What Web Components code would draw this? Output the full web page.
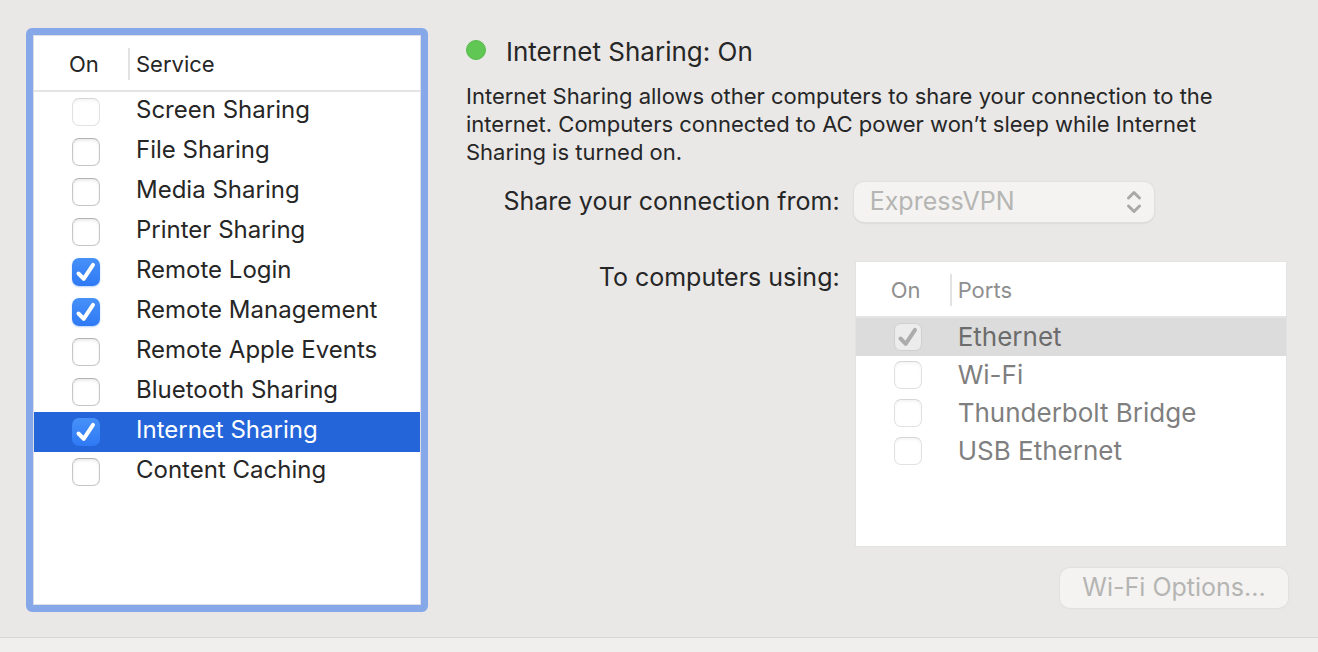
<!DOCTYPE html>
<html lang="en">
<head>
<meta charset="utf-8">
<meta name="viewport" content="width=device-width, initial-scale=1">
<title>Sharing</title>
<style>
  body {
    margin: 0;
    background: #e9e8e6;
    color: #262626;
    font-family: Inter, "Liberation Sans", sans-serif;
  }
</style>
</head>
<body>

<sharing-pane>
  <check-table slot="services" id="services" class="focused" heading="Service"></check-table>

  <status-line>Internet Sharing: On</status-line>
  <help-text>Internet Sharing allows other computers to share your connection to the internet. Computers connected to AC power won’t sleep while Internet Sharing is turned on.</help-text>
  <popup-field label="Share your connection from:" value="ExpressVPN"></popup-field>
  <form-row>
    <span slot="label">To computers using:</span>
    <check-table id="ports" class="inactive" heading="Ports" disabled></check-table>
  </form-row>
  <push-button disabled>Wi-Fi Options...</push-button>
</sharing-pane>

<script>
const services = [
  {name: 'Screen Sharing', disabled: true},
  {name: 'File Sharing'},
  {name: 'Media Sharing'},
  {name: 'Printer Sharing'},
  {name: 'Remote Login', on: true},
  {name: 'Remote Management', on: true},
  {name: 'Remote Apple Events'},
  {name: 'Bluetooth Sharing'},
  {name: 'Internet Sharing', on: true, selected: true},
  {name: 'Content Caching'}
]

const ports = [
  {name: 'Ethernet', on: true, selected: true},
  {name: 'Wi-Fi'},
  {name: 'Thunderbolt Bridge'},
  {name: 'USB Ethernet'}
]

// attach an open root and fill it from a template
function stamp (element, html) {
  const template = document.createElement('template')
  template.innerHTML = html
  element.attachShadow({mode: 'open'})
  element.shadowRoot.appendChild(document.importNode(template.content, true))
}

class SharingPane extends HTMLElement {
  constructor () {
    super()
    stamp(this,
    `<style>
      :host {
        display: flex;
        flex-direction: column;
        min-height: 100vh;
      }

      main {
        flex: 1;
        display: flex;
        gap: 38px;
        padding: 28px 30px 25px 26px;
      }

      aside {
        flex: 0 0 402px;
        display: flex;
      }

      section {
        flex: 1;
        min-width: 0;
        display: flex;
        flex-direction: column;
      }

      footer {
        height: 14px;
        border-top: 1px solid #d8d7d5;
        background: #f0efed;
      }
      </style>
      <main>
        <aside><slot name="services"></slot></aside>
        <section><slot></slot></section>
      </main>
      <footer></footer>`)
  }
}

class StatusLine extends HTMLElement {
  constructor () {
    super()
    stamp(this,
    `<style>
      :host {
        display: flex;
        align-items: center;
        gap: 20px;
        height: 46px;
        margin-bottom: 8px;
      }

      .light {
        width: 20px;
        height: 20px;
        margin-bottom: 2px;
        box-sizing: border-box;
        border: 1px solid #57bb4b;
        border-radius: 50%;
        background: #60c654;
      }

      h1 {
        margin: 0;
        font-size: 26px;
        font-weight: 400;
      }
      </style>
      <span class="light"></span>
      <h1><slot></slot></h1>`)
  }
}

class HelpText extends HTMLElement {
  constructor () {
    super()
    stamp(this,
    `<style>
      :host {
        display: block;
        max-width: 780px;
        margin-bottom: 16px;
      }

      p {
        margin: 0;
        font-size: 22px;
        line-height: 28px;
      }
      </style>
      <p><slot></slot></p>`)
  }
}

class FormRow extends HTMLElement {
  constructor () {
    super()
    stamp(this,
    `<style>
      :host {
        display: grid;
        grid-template-columns: 37fr 43fr;
        gap: 14px;
        font-size: 25px;
        line-height: 32px;
      }

      .label { text-align: right; white-space: nowrap; }
      </style>
      <div class="label"><slot name="label"></slot></div>
      <div><slot></slot></div>`)
  }
}

class PopupField extends HTMLElement {
  constructor () {
    super()
    stamp(this,
    `<style>
      :host {
        display: grid;
        grid-template-columns: 37fr 43fr;
        align-items: center;
        gap: 14px;
        margin-bottom: 39px;
        font-size: 25px;
      }

      label {
        padding-bottom: 2px;
        text-align: right;
        white-space: nowrap;
      }

      .popup {
        display: grid;
        grid-template-columns: minmax(0, 300px);
        align-items: center;
      }

      select, svg { grid-area: 1 / 1; }

      select {
        appearance: none;
        height: 40px;
        padding: 0 16px 2px;
        border: 0;
        border-radius: 10px;
        background: #f4f3f1;
        box-shadow: 0 0 1px 1px #e0e0de, 0 1px 2px #c4c3c1;
        color: #b5b5b3;
        opacity: 1;
        font: inherit;
      }

      svg {
        justify-self: end;
        margin-right: 12px;
        pointer-events: none;
      }
      </style>
      <label for="popup"></label>
      <div class="popup">
        <select id="popup" disabled><option></option></select>
        <svg width="16" height="24" viewBox="0 0 16 24" fill="none" stroke="#aaa9a7" stroke-width="3" stroke-linecap="round" stroke-linejoin="round">
          <path d="M2.5 8 8 2.5 13.5 8M2.5 16 8 21.5 13.5 16"/>
        </svg>
      </div>`)
  }

  connectedCallback () {
    this.shadowRoot.querySelector('label').textContent = this.getAttribute('label')
    this.shadowRoot.querySelector('option').textContent = this.getAttribute('value')
  }
}

class PushButton extends HTMLElement {
  constructor () {
    super()
    stamp(this,
    `<style>
      :host {
        display: block;
        align-self: flex-end;
        margin-top: 21px;
      }

      button {
        display: block;
        min-width: 228px;
        height: 40px;
        padding: 0 16px 2px;
        border: 0;
        border-radius: 10px;
        background: #f4f3f1;
        box-shadow: 0 0 1px 1px #e0e0de;
        color: #b5b5b3;
        font: 25px Inter, "Liberation Sans", sans-serif;
      }
      </style>
      <button type="button"><slot></slot></button>`)
  }

  connectedCallback () {
    this.shadowRoot.querySelector('button').disabled = this.hasAttribute('disabled')
  }
}

class CheckTable extends HTMLElement {
  constructor () {
    super()
    stamp(this,
    `<style>
      :host {
        flex: 1;
        display: block;
        box-sizing: border-box;
        background: #fff;
        border: 1px solid #dfdfdf;
        font-size: 24px;
        line-height: 28px;
      }

      :host(.focused) {
        border: 7px solid #87a8e8;
        border-radius: 6px;
        box-shadow: inset 0 0 0 1px #dcdfe6;
        padding: 1px;
        --row: 40px;
        --lift: 4px;
        --selected: #2465da;
        --selected-text: #fff;
      }

      :host(.inactive) {
        min-height: 286px;
        margin-left: 1px;
        margin-right: 1px;
        border-color: #e3e3e2;
        font-size: 26px;
        color: #7f7f7f;
        --row: 38px;
        --lift: 0;
        --selected: #dcdcdc;
        --selected-text: #6c6c6c;
        --head-text: #8f8f8f;
      }

      table {
        width: 100%;
        border-collapse: separate;
        border-spacing: 0;
        table-layout: fixed;
      }

      th, td {
        padding: 0;
        text-align: left;
        font-weight: 400;
      }

      th {
        height: 54px;
        border-bottom: 2px solid #e4e4e4;
        color: var(--head-text, inherit);
        font-size: 22px;
      }

      th:first-child { width: 94px; }
      th span { display: block; margin-top: 2px; line-height: 32px; }
      th:first-child span { padding-left: 35px; }
      th:last-child span { border-left: 2px solid #e2e2e2; padding-left: 6px; }

      td { height: var(--row); }
      td:last-child { padding-left: 8px; }

      label {
        display: block;
        padding-bottom: var(--lift);
      }

      .selected td {
        background: var(--selected);
        color: var(--selected-text);
      }

      .box {
        display: grid;
        width: 28px;
        margin-left: 38px;
      }

      input, svg { grid-area: 1 / 1; }

      input {
        appearance: none;
        width: 28px;
        height: 28px;
        margin: 0;
        box-sizing: border-box;
        border: 1px solid #c6c6c6;
        border-top-color: #b2b2b2;
        border-radius: 7px;
        background: #fff;
        box-shadow: inset 0 2px 3px #ececec;
      }

      input:checked {
        border: 0;
        background: linear-gradient(#4691f8, #2f79f5);
        box-shadow: 0 1px 2px #b8d1fa;
      }

      .selected input:checked { box-shadow: none; }

      input:disabled {
        border: 1px solid #e2e2e2;
        border-top-color: #d6d6d6;
        box-shadow: inset 0 2px 3px #f5f5f5;
      }

      .selected input:disabled {
        border-color: #d0d0d0;
        background: #ececec;
        box-shadow: none;
      }

      svg {
        fill: none;
        stroke: #fff;
        stroke-width: 4;
        stroke-linecap: round;
        stroke-linejoin: round;
        pointer-events: none;
      }

      input:not(:checked) + svg { display: none; }
      input:disabled + svg { stroke: #acacac; }
      </style>
      <table>
        <thead>
          <tr><th scope="col"><span>On</span></th><th scope="col"><span class="heading"></span></th></tr>
        </thead>
        <tbody></tbody>
      </table>`)
  }

  connectedCallback () {
    this.shadowRoot.querySelector('.heading').textContent = this.getAttribute('heading')
    this.render(this.id === 'ports' ? ports : services)
  }

  render (rows) {
    const disabled = this.hasAttribute('disabled')
    this.shadowRoot.querySelector('tbody').innerHTML = rows.map((row, i) => `
      <tr class="${row.selected ? 'selected' : ''}">
        <td>
          <div class="box">
            <input type="checkbox" id="row${i}" ${row.on ? 'checked' : ''} ${disabled || row.disabled ? 'disabled' : ''}>
            <svg width="28" height="28" viewBox="0 0 28 28"><path d="M6.5 15.5 11.7 20.8 21 6.8"/></svg>
          </div>
        </td>
        <td><label for="row${i}">${row.name}</label></td>
      </tr>`).join('')
  }
}

customElements.define('sharing-pane', SharingPane)
customElements.define('status-line', StatusLine)
customElements.define('help-text', HelpText)
customElements.define('form-row', FormRow)
customElements.define('popup-field', PopupField)
customElements.define('push-button', PushButton)
customElements.define('check-table', CheckTable)
</script>
</body>
</html>
